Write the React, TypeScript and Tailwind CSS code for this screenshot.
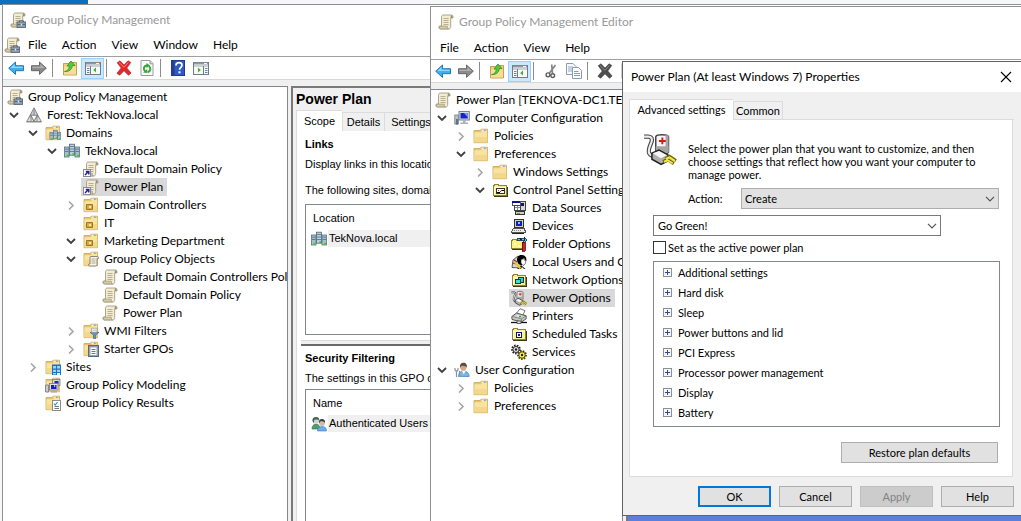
import { useState } from "react";
import type { ReactNode } from "react";

/* ---------- icon drawing helpers ---------- */

function Svg({ children, size = 16, box = 16, crisp = false }: { children: ReactNode; size?: number; box?: number; crisp?: boolean }) {
  return (
    <svg
      width={size}
      height={size}
      viewBox={`0 0 ${box} ${box}`}
      fill="none"
      aria-hidden="true"
      className="block shrink-0"
      shapeRendering={crisp ? "crispEdges" : "auto"}
    >
      {children}
    </svg>
  );
}

const ScrollShape = () => (
  <>
    <path d="M5.500 1h8c1.300 0 1.800 1.400 1.400 3h-2.200v8.600c0 1.500-.7 2.400-2 2.400H2.400c-1.600 0-1.900-2-.9-3H3.500V3.200C3.500 1.800 4.200 1 5.500 1z" fill="#f4ecd0" stroke="#a39c85" strokeWidth=".9" />
    <path d="M12.700 4V2.500c0-.8.4-1.300 1-1.300s1.200.9 1 2.800z" fill="#9a9070" />
    <path d="M1.600 12.200h7.800c-.3 1 .1 2.300 1 2.700H2.300c-1.200-.3-1.400-1.800-.7-2.700z" fill="#d8cba0" stroke="#8f8870" strokeWidth=".6" />
    <path d="M5.500 4.500h5M5.500 6.500h5M5.500 8.500h5M5.500 10.500h5" stroke="#b0a88a" strokeWidth=".9" />
  </>
);
const Scroll = () => <Svg><ScrollShape /></Svg>;
const ScrollTools = () => (
  <Svg>
    <ScrollShape />
    <path d="M9.500 10V8.800h4V10" stroke="#566371" strokeWidth="1" />
    <rect x="7" y="9.900" width="8.600" height="5.500" fill="#8b9db0" stroke="#52606e" strokeWidth=".8" />
    <path d="M7.400 12.500h7.800" stroke="#4b5967" strokeWidth=".8" />
    <rect x="10.700" y="11.600" width="1.500" height="2" fill="#dfe6ec" />
  </Svg>
);
const ScrollLink = () => (
  <Svg>
    <ScrollShape />
    <rect x=".5" y="8.500" width="7" height="7" fill="#fff" stroke="#8b8b95" />
    <path d="M2 14l3-3M2.800 10.500h3v3" stroke="#23238c" strokeWidth="1.500" />
  </Svg>
);

const FolderShape = () => (
  <>
    <path d="M1 2.500h6l1-1.300h6.500V14.700H1z" fill="#e9c66a" stroke="#c9a558" strokeWidth=".8" />
    <path d="M1.400 4.300H8l1-1.200h5.200v11.200H1.400z" fill="#f9e3a0" />
    <path d="M1.400 9h12.800v5.300H1.400z" fill="#f3d88c" />
    <path d="M8.500 2.200h5" stroke="#fff" />
    <path d="M10.800 2.200h2" stroke="#4c8fd0" />
  </>
);
const Folder = () => <Svg><FolderShape /></Svg>;
const FolderOU = () => (
  <Svg>
    <FolderShape />
    <path d="M3.500 7.500h6v5h-6z" fill="#d3aa48" stroke="#9a7826" />
    <rect x="6" y="9" width="2" height="2" fill="#fbe7a8" />
  </Svg>
);
const FolderScroll = () => (
  <Svg>
    <FolderShape />
    <path d="M8 5.500h6.500c1 0 1.200 1 1 1.800H14v6c0 1-.5 1.700-1.400 1.700H6.300c-.9 0-1-1.400-.4-2H7V6.500c0-.6.4-1 1-1z" fill="#f7f3e6" stroke="#7f7a6a" strokeWidth=".9" />
    <path d="M8.500 8h4M8.500 10h4M8.500 12h4" stroke="#9b957f" strokeWidth=".8" />
  </Svg>
);
const FolderFilter = () => (
  <Svg>
    <FolderShape />
    <path d="M7 9.300h9L12.700 12v3.500h-2.200V12z" fill="#6d93b5" stroke="#46647f" strokeWidth=".7" />
    <path d="M8.500 7.500V5.200h5.500v4.100H8.500z" fill="#f1f3f5" stroke="#9098a0" strokeWidth=".7" />
    <path d="M9.500 7.200h3.500" stroke="#a9b1b9" strokeWidth=".8" />
  </Svg>
);
const FolderStarter = () => (
  <Svg>
    <FolderShape />
    <rect x="5.500" y="4.500" width="10" height="11" fill="#8ea3b8" stroke="#596a7b" />
    <path d="M5 4.500h11" stroke="#a0533c" strokeWidth="1.200" />
    <rect x="7.500" y="6.500" width="6" height="7.500" fill="#fff" />
    <path d="M8.500 8.500h4M8.500 10.500h4M8.500 12.500h4" stroke="#4c82c4" />
  </Svg>
);
const FolderSites = () => (
  <Svg>
    <FolderShape />
    <rect x="7" y="5.500" width="9" height="10.500" fill="#1f6fc2" />
    <path d="M8 7h3v2.500H8zM12 7h3v2.500h-3zM8 10.700h3V13H8zM12 10.700h3V13h-3zM8 14h3v1.500H8z" fill="#9bd4f7" />
    <path d="M12 14h3v2h-3z" fill="#eaf6ff" />
  </Svg>
);
const FolderResults = () => (
  <Svg>
    <FolderShape />
    <rect x="7.500" y="5.500" width="8" height="10" fill="#fff" stroke="#8d8d8d" />
    <path d="M9 8.500l1.200 1.500L12.500 7" stroke="#2d8fd0" strokeWidth="1.200" />
    <path d="M9.500 11.500h4.500M9.500 13.500h4.500" stroke="#777" />
  </Svg>
);
const ServerShapes = () => (
  <>
    <rect x=".5" y="4" width="4.500" height="10" fill="#a9bfce" stroke="#587083" strokeWidth=".8" />
    <rect x="11" y="4" width="4.500" height="10" fill="#a9bfce" stroke="#587083" strokeWidth=".8" />
    <rect x="5.500" y="1.200" width="5" height="11" fill="#bdd0dc" stroke="#4a6478" strokeWidth=".8" />
    <path d="M1 6.200h3.500M1 8.500h3.500M6 3.500h4M6 6h4M6 8.500h4M11.500 6.200h3.500M11.500 8.500h3.500" stroke="#4f6e84" strokeWidth=".8" />
    <path d="M2.500 12.700h2M8.500 11h1.500M13 12.700h2" stroke="#37d51c" strokeWidth="1.800" />
  </>
);
const Servers = () => <Svg><ServerShapes /></Svg>;
const Domains = () => (
  <Svg>
    <FolderShape />
    <g transform="translate(4.500 4.300) scale(.74)"><ServerShapes /></g>
  </Svg>
);
const Forest = () => (
  <Svg>
    <path d="M8 .8L15.500 15H.5z" fill="#9b9b9b" stroke="#777" strokeWidth=".8" />
    <path d="M8 1.500L11 8H5z" fill="#cfcfcf" />
    <path d="M5 8.500L7.500 14H1.500zM11 8.500L14.500 14H8.500z" fill="#e2e2e2" />
    <path d="M8 1.500V8M5 8.500V14M11 8.500V14M4.500 8.200h7L8 14.500z" stroke="#737373" strokeWidth=".8" />
    <path d="M5.700 8.700h4.600L8 13z" fill="#fff" />
  </Svg>
);
const Modeling = () => (
  <Svg>
    <FolderShape />
    <rect x="7.500" y="2.500" width="7.500" height="6" fill="#d9d9d9" stroke="#777" strokeWidth=".8" />
    <rect x="9.500" y="4" width="4" height="3.200" fill="#2525c8" />
    <path d="M.5 8h3v7h-3z" fill="#c9ccd0" stroke="#777" strokeWidth=".8" />
    <rect x="4.500" y="6.500" width="8.500" height="6.500" fill="#e3e3e3" stroke="#777" strokeWidth=".8" />
    <rect x="6" y="8" width="5.500" height="4" fill="#1a1ad0" />
    <path d="M9 8h1.200v2H9z" fill="#9fb3ff" />
    <path d="M6 14.800h6" stroke="#aaa" strokeWidth="1.500" />
  </Svg>
);
const Users = () => (
  <Svg>
    <path d="M1 13c0-3 1.500-5 4-5s4 2 4 5z" fill="#4f9b70" stroke="#3a6d51" strokeWidth=".6" />
    <circle cx="5" cy="4.500" r="3.200" fill="#cfd5d2" />
    <path d="M1.500 5C1 2.300 2.700.9 5 .9s3.800 1.500 3.200 3.500C6.800 3 5 4 3.500 3.500 3 5 3 7 2.500 7z" fill="#466357" />
    <path d="M6.500 15c0-3 1.500-4.500 4.500-4.500s4.500 1.500 4.500 4.500z" fill="#69aee8" stroke="#3a7cba" strokeWidth=".6" />
    <circle cx="11" cy="7" r="2.900" fill="#ccbda8" />
    <path d="M8 7c-.3-2.400 1-4 3-4s3.400 1.500 3 4c-1-2-2.500-1.500-4-2-.8.600-1 1.500-2 2z" fill="#343c46" />
  </Svg>
);
const Computer = () => (
  <Svg>
    <rect x=".8" y="5" width="3.500" height="9" fill="#b7c6d0" stroke="#6c7b86" strokeWidth=".8" />
    <rect x="5" y="1.500" width="10.300" height="8.500" fill="#d8dde2" stroke="#78828b" />
    <rect x="6.500" y="3" width="7.300" height="5.500" fill="#1226c8" />
    <path d="M10 3h3.800v4.500z" fill="#7d93f2" />
    <path d="M9 10h2.500v2.500H14v1.500H6.500v-1.500H9z" fill="#aab1b8" />
    <path d="M3 9v5.500" stroke="#3f5a70" strokeWidth="1.500" />
  </Svg>
);
const UserConfig = () => (
  <Svg>
    <path d="M4.500 14.500c0-3.500 2-5.500 5-5.500s5.700 2 5.700 5.500z" fill="#79b4e6" stroke="#4680b5" strokeWidth=".7" />
    <path d="M8 9l1.800 3.500L11.500 9z" fill="#fff" />
    <circle cx="9.300" cy="5.500" r="3.100" fill="#d8a582" />
    <path d="M6 5.500C5.500 2.500 7 .8 9.500 .8s4 2 3.200 5C11.500 3.300 9.500 4.700 7.700 3.800z" fill="#5c4a3c" />
    <path d="M1 6v2L2.500 9.500v5.500M4 6v2L2.500 9.500M5.500 9v6" stroke="#8794a0" strokeWidth="1.200" />
  </Svg>
);

/* classic control panel icons */
const ClassicFolder = () => (
  <>
    <path d="M1.500 13.500v-10h1v-1h4v1h8v10z" fill="#f6f0a0" stroke="#8b8430" />
    <path d="M3 5.500h11M2.500 5v8" stroke="#fffce0" />
    <path d="M2 14.500h13.500V5" stroke="#3c3a18" />
  </>
);
const ControlPanel = () => (
  <Svg crisp>
    <ClassicFolder />
    <rect x="4.500" y="6.500" width="8" height="5" fill="#fff" stroke="#333" />
    <path d="M5 10.500h3M10 8.500h2" stroke="#000" />
    <path d="M8 10l2-2M6 8.500h1" stroke="#e01010" strokeWidth="1.200" />
  </Svg>
);
const DataSources = () => (
  <Svg crisp>
    <rect x="8.500" y="1.500" width="6" height="9" fill="#d8d8d8" stroke="#444" />
    <rect x="10" y="3" width="3" height="3" fill="#10128c" />
    <rect x="1.500" y="1.500" width="8" height="4" fill="#fff" stroke="#555" />
    <path d="M1 2h8" stroke="#10128c" strokeWidth="2" />
    <path d="M3.500 5.500h6v5h-6z" fill="#fff" stroke="#444" />
    <path d="M4 7.500h5M6.500 6v4" stroke="#888" />
    <path d="M4.500 11.500h9v3h-9z" fill="#cfcfcf" stroke="#333" />
    <path d="M6 13h3" stroke="#1ec81e" strokeWidth="1" />
  </Svg>
);
const Devices = () => (
  <Svg crisp>
    <rect x="3.500" y="1.500" width="9" height="8" fill="#d0d0d0" stroke="#333" />
    <rect x="5" y="3" width="6" height="5" fill="#1919c8" />
    <path d="M7 4h2v2H7z" fill="#7bd7ff" />
    <path d="M2.500 10.500h10l2 3v1h-14v-1z" fill="#ececec" stroke="#555" />
    <path d="M3 12.500h8" stroke="#888" strokeDasharray="1 1" />
    <path d="M12 9l3 4-2 2" stroke="#555" />
    <path d="M1 15.500h12" stroke="#222" />
  </Svg>
);
const FolderOptions = () => (
  <Svg crisp>
    <path d="M.5 4.500h1v-1h4v1h7v8H.5z" fill="#fbf37e" stroke="#8b8430" />
    <path d="M1 13.500h11" stroke="#3c3a18" />
    <path d="M3 7h2v2H3zM7 9h2v2H7z" fill="#fffbd0" />
    <path d="M6 2h8l2 2-2 2h-2V4H6z" fill="#55cbe8" stroke="#103c5c" strokeWidth=".8" />
    <path d="M8 2l3 2M13 1v4" stroke="#222" />
    <path d="M11 6h3v9h-3z" fill="#d8201c" stroke="#5d0606" strokeWidth=".8" />
  </Svg>
);
const LocalUsers = () => (
  <Svg>
    <path d="M1 13.500L2 6l5-4 3 4v8z" fill="#d5d5d5" stroke="#333" strokeWidth=".8" />
    <path d="M3 6l3 2M2 9l3 1" stroke="#a71919" strokeWidth="1.200" />
    <path d="M6.500 8C5 3.500 7.300.8 11 1c3.500.2 5 3 4.300 6-1.600-.3-1.600-2-2.300-3-1 1.500-2.700 1-3 3-.1 2 1.500 3 1 4-2 .4-4-1-4.500-3z" fill="#000" />
    <path d="M10 6.500c.6-1.600 2-1.200 3-2 .3 1.500 1 2.400 1.800 2.700 0 2-1 4-2.800 4.200L10 9z" fill="#fff" stroke="#222" strokeWidth=".6" />
    <path d="M6 15l4.500-3.500 4 3.500z" fill="#111" />
    <path d="M3.500 8l6 6.500" stroke="#e6c722" strokeWidth="2" />
    <path d="M10 15l1-2 2 2z" fill="#fff" />
  </Svg>
);
const NetworkOptions = () => (
  <Svg crisp>
    <ClassicFolder />
    <rect x="7.500" y="5.500" width="5" height="5" fill="#21d4d4" stroke="#1c3c3c" />
    <rect x="4.500" y="7.500" width="5" height="4" fill="#35e3dd" stroke="#1c3c3c" />
  </Svg>
);
const PowerShapes = () => (
  <>
    <path d="M.5 2.200h2c1.500 0 2 1 1.500 2.500S2 8.700 3 10.200 6 12 8 12.500" stroke="#444" strokeWidth="2" />
    <path d="M.5 2.200h2c1.500 0 2 1 1.500 2.500S2 8.700 3 10.200 6 12 8 12.500" stroke="#ececec" strokeWidth="1" />
    <path d="M6 2.200C6.500 1 11.500 1 12 2.200v7.300c-.6 1.200-5.400 1.200-6 0z" fill="#f6f6f6" stroke="#444" strokeWidth=".7" />
    <path d="M10.600 1.500H12v8l-1.400.6z" fill="#a8a8a8" />
    <path d="M7.500 4.200h3.200M9.100 2.600v3.200" stroke="#e21414" strokeWidth=".9" />
    <path d="M6 6.700h6v2.800c-.6 1.200-5.400 1.200-6 0z" fill="#a5a5a5" />
    <path d="M4.200 10l3.300-1.500 4.300 2.300v2.700l-3.300 1.800-4.300-2.500z" fill="#b0b0b0" stroke="#222" strokeWidth=".7" />
    <path d="M4.600 10l3-1.100 3.600 2-2.800 1.400z" fill="#f5f5f5" />
    <path d="M10.500 12.700l2-1.200 3 2M9.500 14l2-1.100 3 2" stroke="#6e6408" strokeWidth="1.500" />
    <path d="M10.700 12.700l1.800-.8 2.500 1.700M9.900 14l1.700-.7 2.400 1.400" stroke="#f6e74b" strokeWidth=".9" />
  </>
);
const PowerOptions = () => <Svg><PowerShapes /></Svg>;
const Printers = () => (
  <Svg>
    <path d="M5 6l4-5.300 5 2L11.500 8z" fill="#fff" stroke="#555" strokeWidth=".8" />
    <path d="M.8 8.500L5.500 5l9.700 2.800v3L10.500 14 1 11.500z" fill="#c7c7c7" stroke="#333" strokeWidth=".8" />
    <path d="M1.500 8.500l9 2.400 4.300-2.900M10.500 11v3" stroke="#6b6b6b" strokeWidth=".7" />
    <path d="M5.500 7.600l5 1.300" stroke="#eee" strokeWidth="1.300" />
    <path d="M8 8.700h2" stroke="#19b519" strokeWidth="1.300" />
    <path d="M0 14.500h16" stroke="#111" strokeWidth="1.300" />
    <path d="M6 13h4v2.500H6z" fill="#ddd" stroke="#444" strokeWidth=".8" />
  </Svg>
);
const ScheduledTasks = () => (
  <Svg crisp>
    <ClassicFolder />
    <rect x="5.500" y="6.500" width="5" height="5" fill="#fff" stroke="#10107c" />
    <rect x="7" y="8" width="2" height="2" fill="#1a1a8c" />
  </Svg>
);
const Services = () => (
  <Svg>
    <circle cx="5" cy="5.500" r="3.800" fill="#fff" stroke="#222" strokeWidth="2.200" strokeDasharray="1.500 1.100" />
    <circle cx="5" cy="5.500" r="3" fill="#e8e8e8" stroke="#222" strokeWidth=".9" />
    <circle cx="5" cy="5.500" r="1.200" fill="#222" />
    <circle cx="11" cy="11" r="3.800" fill="#f6e64b" stroke="#4a4205" strokeWidth="2.200" strokeDasharray="1.500 1.100" />
    <circle cx="11" cy="11" r="3.200" fill="#fbee67" stroke="#4a4205" strokeWidth=".9" />
    <circle cx="11" cy="11" r="1.200" fill="#222" />
  </Svg>
);

/* toolbar icons */
const Back = () => (
  <Svg>
    <path d="M.7 8.200L7.500 2v3.700h8v5h-8v3.700z" fill="#3fb0ee" stroke="#1b6cab" strokeWidth=".9" />
    <path d="M2.300 8L6.600 4v2.700h8V8z" fill="#8fd9fb" />
  </Svg>
);
const Forward = () => (
  <Svg>
    <path d="M15.300 8.200L8.500 2v3.700h-8v5h8v3.700z" fill="#8c8c8c" stroke="#5d5d5d" strokeWidth=".9" />
    <path d="M13.700 8L9.400 4v2.700h-8V8z" fill="#b0b0b0" />
  </Svg>
);
const UpFolder = () => (
  <Svg>
    <path d="M1.500 3.500h5l1-1h7v12.500h-13z" fill="#efcf7b" stroke="#b98f36" strokeWidth=".8" />
    <path d="M2 6.500h12v8H2z" fill="#f7dd96" />
    <path d="M2.500 11.500C5.500 11 7 9.500 7.300 6H5l4-5 4 4.500H10.400C10 9.500 7 12 2.500 11.500z" fill="#4fcb3d" stroke="#2a8a23" strokeWidth=".7" />
  </Svg>
);
const Pane = ({ flip = false }: { flip?: boolean }) => (
  <Svg>
    <rect x=".5" y="2.500" width="15" height="12" fill="#f8f9fa" stroke="#737b84" />
    <path d="M1 3.500h14" stroke="#8f98a3" strokeWidth="2" />
    <path d="M11 3.500h3" stroke="#fff" strokeWidth=".9" />
    <path d="M1 6h14" stroke="#a0a7af" />
    <path d={flip ? "M10.500 6v8.500" : "M5.500 6v8.500"} stroke="#737b84" />
    <path d={flip ? "M12 8.500h2.500M12 10.500h2.500M12 12.500h2.500" : "M2 8.500h2.500M2 10.500h2.500M2 12.500h2.500"} stroke="#5f86b8" />
    <path d={flip ? "M5 7.500v5L7.800 10z" : "M11 7.500v5L8.200 10z"} fill="#3bb52c" />
  </Svg>
);
const Cross = ({ gray = false }: { gray?: boolean }) => (
  <Svg>
    <path
      d="M1.200 2.800L4 .8 8 5l4-4.200 2.800 1.600L10.800 8l4.300 5-2.600 2.300L8 10.800l-4.300 4.400L.9 13.300 5.200 8z"
      fill={gray ? "#4e4e4e" : "#e3282b"}
      stroke={gray ? "#3c3c3c" : "#b51518"}
      strokeWidth=".6"
    />
    <path d="M3 2.500L8 7.300l4.300-4.800" stroke={gray ? "#858585" : "#f58081"} strokeWidth="1" />
  </Svg>
);
const Refresh = () => (
  <Svg>
    <path d="M2 .5h9l3 3v12H2z" fill="#fbfbfb" stroke="#9a9a9a" />
    <path d="M11 .8v3h3" fill="#ddd" stroke="#9a9a9a" />
    <path d="M6.200 11.300C3.800 9.500 4.700 5.700 8 5.500M9.800 6.200c2.500 1.500 2 5.300-1.300 6" stroke="#35a637" strokeWidth="1.900" />
    <path d="M7.500 3l3.600 2.500L7.500 8zM4 12.500l4.200.5V9z" fill="#35a637" />
  </Svg>
);
const HelpIcon = () => (
  <Svg>
    <rect x="1.500" y=".5" width="13" height="15" fill="#3059c4" stroke="#1c3c91" />
    <path d="M1.500.5h3v15h-3z" fill="#233f94" />
    <path d="M6 5.500C6 3.500 7.200 2.700 9 2.700s3 1 3 2.500c0 2-2.500 2.200-2.500 4.600" stroke="#fff" strokeWidth="1.700" />
    <rect x="8.500" y="11.300" width="2" height="2" fill="#fff" />
  </Svg>
);
const Cut = () => (
  <Svg>
    <path d="M12.500 2L6.500 10M8.700 1.500l.8 8.500" stroke="#858585" strokeWidth="1.700" />
    <circle cx="5" cy="11.800" r="1.900" stroke="#5c5c5c" strokeWidth="1.400" />
    <circle cx="9.700" cy="12.600" r="1.900" stroke="#5c5c5c" strokeWidth="1.400" />
  </Svg>
);
const Copy = () => (
  <Svg>
    <path d="M.5.5h6.500l3 3v8H.5z" fill="#f6f9fc" stroke="#8d9bab" />
    <path d="M2 4h5M2 6h5M2 8h4" stroke="#8aaed0" />
    <path d="M6.500 4.500h6l3 3v8h-9z" fill="#fff" stroke="#8d9bab" />
    <path d="M8 8.500h4.500M8 10.500h6M8 12.500h6" stroke="#7c9fc4" />
  </Svg>
);

const ChevronOpen = () => (
  <svg width="10" height="10" viewBox="0 0 10 10" fill="none" aria-hidden="true">
    <path d="M1 3l4 4 4-4" stroke="#404040" strokeWidth="1.800" />
  </svg>
);
const ChevronShut = () => (
  <svg width="10" height="10" viewBox="0 0 10 10" fill="none" aria-hidden="true">
    <path d="M3 1.500l4 4-4 4" stroke="#a6a6a6" strokeWidth="1.600" />
  </svg>
);
const ChevronThin = () => (
  <svg width="10" height="6" viewBox="0 0 10 6" fill="none" aria-hidden="true">
    <path d="M1 .8l4 4 4-4" stroke="#555" strokeWidth="1.200" />
  </svg>
);

/* ---------- tree ---------- */

type Node = { level: number; label: string; icon: ReactNode; state?: "open" | "shut"; selected?: boolean };

const indents = ["pl-[4px]", "pl-[5px]", "pl-[24px]", "pl-[43px]", "pl-[62px]", "pl-[81px]"];

function Tree({ label, nodes }: { label: string; nodes: Node[] }) {
  return (
    <ul role="tree" aria-label={label} className="pt-px">
      {nodes.map((n, i) => (
        <li
          key={i}
          role="treeitem"
          aria-level={n.level + 1}
          aria-selected={!!n.selected}
          className={`flex h-[18px] items-center whitespace-nowrap ${indents[n.level]}`}
        >
          {n.level > 0 && (
            <span className="flex w-4 shrink-0 items-center pl-px">
              {n.state && (
                <button type="button" aria-label={`${n.state === "open" ? "Collapse" : "Expand"} ${n.label}`}>
                  {n.state === "open" ? <ChevronOpen /> : <ChevronShut />}
                </button>
              )}
            </span>
          )}
          <span className={`flex h-[18px] items-center gap-[5px] pr-1 ${n.level > 0 ? "pl-[2px]" : ""} ${n.selected ? "bg-[#d9d9d9]" : ""}`}>
            {n.icon}
            <span>{n.label}</span>
          </span>
        </li>
      ))}
    </ul>
  );
}

const managementNodes: Node[] = [
  { level: 0, label: "Group Policy Management", icon: <ScrollTools /> },
  { level: 1, label: "Forest: TekNova.local", icon: <Forest />, state: "open" },
  { level: 2, label: "Domains", icon: <Domains />, state: "open" },
  { level: 3, label: "TekNova.local", icon: <Servers />, state: "open" },
  { level: 4, label: "Default Domain Policy", icon: <ScrollLink /> },
  { level: 4, label: "Power Plan", icon: <ScrollLink />, selected: true },
  { level: 4, label: "Domain Controllers", icon: <FolderOU />, state: "shut" },
  { level: 4, label: "IT", icon: <FolderOU /> },
  { level: 4, label: "Marketing Department", icon: <FolderOU />, state: "open" },
  { level: 4, label: "Group Policy Objects", icon: <FolderScroll />, state: "open" },
  { level: 5, label: "Default Domain Controllers Policy", icon: <Scroll /> },
  { level: 5, label: "Default Domain Policy", icon: <Scroll /> },
  { level: 5, label: "Power Plan", icon: <Scroll /> },
  { level: 4, label: "WMI Filters", icon: <FolderFilter />, state: "shut" },
  { level: 4, label: "Starter GPOs", icon: <FolderStarter />, state: "shut" },
  { level: 2, label: "Sites", icon: <FolderSites />, state: "shut" },
  { level: 2, label: "Group Policy Modeling", icon: <Modeling /> },
  { level: 2, label: "Group Policy Results", icon: <FolderResults /> },
];

const editorNodes: Node[] = [
  { level: 0, label: "Power Plan [TEKNOVA-DC1.TEKNOVA.LOCAL] Policy", icon: <Scroll /> },
  { level: 1, label: "Computer Configuration", icon: <Computer />, state: "open" },
  { level: 2, label: "Policies", icon: <Folder />, state: "shut" },
  { level: 2, label: "Preferences", icon: <Folder />, state: "open" },
  { level: 3, label: "Windows Settings", icon: <Folder />, state: "shut" },
  { level: 3, label: "Control Panel Settings", icon: <ControlPanel />, state: "open" },
  { level: 4, label: "Data Sources", icon: <DataSources /> },
  { level: 4, label: "Devices", icon: <Devices /> },
  { level: 4, label: "Folder Options", icon: <FolderOptions /> },
  { level: 4, label: "Local Users and Groups", icon: <LocalUsers /> },
  { level: 4, label: "Network Options", icon: <NetworkOptions /> },
  { level: 4, label: "Power Options", icon: <PowerOptions />, selected: true },
  { level: 4, label: "Printers", icon: <Printers /> },
  { level: 4, label: "Scheduled Tasks", icon: <ScheduledTasks /> },
  { level: 4, label: "Services", icon: <Services /> },
  { level: 1, label: "User Configuration", icon: <UserConfig />, state: "open" },
  { level: 2, label: "Policies", icon: <Folder />, state: "shut" },
  { level: 2, label: "Preferences", icon: <Folder />, state: "shut" },
];

/* ---------- window chrome ---------- */

function MenuBar({ items }: { items: string[] }) {
  return (
    <nav aria-label="Menu" className="flex gap-[15px]">
      {items.map((item) => (
        <button key={item} type="button">{item}</button>
      ))}
    </nav>
  );
}

function Tool({ label, children, active = false }: { label: string; children: ReactNode; active?: boolean }) {
  return (
    <button
      type="button"
      aria-label={label}
      aria-pressed={active || undefined}
      className={`flex h-[21px] w-[23px] shrink-0 items-center justify-center ${active ? "border border-[#99d1ff] bg-[#cce8ff]" : ""}`}
    >
      {children}
    </button>
  );
}
const Separator = () => <span className="mr-[5px] ml-[2px] h-[18px] w-px shrink-0 bg-[#8c8c8c]" />;

const uiFont = "font-[family-name:Lato,sans-serif] text-[12px] leading-[18px]";
const formFont = "font-[family-name:Liberation_Sans,Arial,sans-serif] text-[11px] leading-[16px]";
const dialogFont = "font-[family-name:Lato,sans-serif] text-[11px] leading-[13px]";

function ListTable({ head, row, icon }: { head: string; row: string; icon: ReactNode }) {
  return (
    <table className="w-full border-collapse text-left">
      <thead>
        <tr>
          <th className="h-[25px] pt-px pl-[7px] font-normal">{head}</th>
        </tr>
      </thead>
      <tbody>
        <tr>
          <td className="p-0 pl-[5px]">
            <span className="flex items-center gap-px">
              {icon}
              <span className="h-[17px] flex-1 bg-[#f0f0f0] pl-px whitespace-nowrap">{row}</span>
            </span>
          </td>
        </tr>
      </tbody>
    </table>
  );
}

function ManagementWindow() {
  return (
    <section
      aria-label="Group Policy Management"
      className={`absolute top-1 right-0 bottom-0 left-[2px] flex flex-col border-t border-l border-[#8c8f94] bg-white text-black ${uiFont}`}
    >
      <header className="flex h-[29px] items-center gap-[5px] pl-[7px] text-[#999]">
        <ScrollTools />
        <h1>Group Policy Management</h1>
      </header>
      <div className="flex h-[23px] items-center gap-2 border-b border-[#a0a0a0] pl-px">
        <ScrollTools />
        <MenuBar items={["File", "Action", "View", "Window", "Help"]} />
      </div>
      <div role="toolbar" aria-label="Tools" className="flex h-[23px] items-center border-b border-[#d8d8d8] pl-px">
        <Tool label="Back"><Back /></Tool>
        <Tool label="Forward"><Forward /></Tool>
        <Separator />
        <Tool label="Up one level"><UpFolder /></Tool>
        <Tool label="Show console tree" active><Pane /></Tool>
        <Separator />
        <Tool label="Delete"><Cross /></Tool>
        <Tool label="Refresh"><Refresh /></Tool>
        <Separator />
        <Tool label="Help"><HelpIcon /></Tool>
        <Tool label="Show action pane"><Pane flip /></Tool>
      </div>
      <div className="flex min-h-0 flex-1 bg-[#f0f0f0] pt-[6px]">
        <div className="w-[285px] shrink-0 overflow-hidden border border-b-0 border-l-0 border-[#828790] bg-white">
          <Tree label="Console tree" nodes={managementNodes} />
        </div>
        <div className={`ml-[3px] min-w-0 flex-1 border-t-2 border-l-2 border-[#7a7a7a] pl-[3px] ${formFont}`}>
          <h2 className="h-[22px] pt-[3px] text-[14px] font-bold">Power Plan</h2>
          <div role="tablist" className="flex items-end">
            <button type="button" role="tab" aria-selected="true" className="h-[21px] w-[46px] border-t border-l border-[#dcdcdc] bg-white">Scope</button>
            <button type="button" role="tab" aria-selected="false" className="h-[19px] w-[42px] border-t border-l border-[#dcdcdc]">Details</button>
            <button type="button" role="tab" aria-selected="false" className="h-[19px] w-[54px] border-t border-x border-[#dcdcdc]">Settings</button>
          </div>
          <div role="tabpanel" className="flex h-full flex-col border-l border-[#dcdcdc] bg-white">
            <div className="px-2 pt-[5px] whitespace-nowrap">
              <h3 className="font-bold">Links</h3>
              <p className="mt-1">Display links in this location:</p>
              <p className="mt-[10px]">The following sites, domains, and OUs are linked to this GPO:</p>
              <div className="mt-[6px] h-[131px] border border-[#828790]">
                <ListTable head="Location" row="TekNova.local" icon={<Servers />} />
              </div>
            </div>
            <div className="mt-[5px] ml-1 h-[6px] border-t border-b-2 border-t-[#dcdcdc] border-b-[#696969] bg-[#f0f0f0]" />
            <div className="flex flex-1 flex-col px-2 pt-1 whitespace-nowrap">
              <h3 className="font-bold">Security Filtering</h3>
              <p className="mt-1">The settings in this GPO can only apply to the following:</p>
              <div className="mt-[3px] flex-1 border border-[#828790]">
                <ListTable head="Name" row="Authenticated Users" icon={<Users />} />
              </div>
            </div>
          </div>
        </div>
      </div>
    </section>
  );
}

function EditorWindow() {
  return (
    <section
      aria-label="Group Policy Management Editor"
      className={`absolute top-[6px] right-0 bottom-0 left-[430px] flex flex-col border-t border-l border-[#8c8f94] bg-white text-black ${uiFont}`}
    >
      <header className="flex h-[30px] items-center gap-[5px] pl-[7px] text-[#999]">
        <Scroll />
        <h1>Group Policy Management Editor</h1>
      </header>
      <div className="flex h-[23px] items-center border-b border-[#a0a0a0] pl-[9px]">
        <MenuBar items={["File", "Action", "View", "Help"]} />
      </div>
      <div role="toolbar" aria-label="Tools" className="flex h-[23px] items-center border-b border-[#d8d8d8]">
        <Tool label="Back"><Back /></Tool>
        <Tool label="Forward"><Forward /></Tool>
        <Separator />
        <Tool label="Up one level"><UpFolder /></Tool>
        <Tool label="Show console tree" active><Pane /></Tool>
        <Separator />
        <Tool label="Cut"><Cut /></Tool>
        <Tool label="Copy"><Copy /></Tool>
        <Separator />
        <Tool label="Delete"><Cross gray /></Tool>
        <Tool label="Properties"><Refresh /></Tool>
      </div>
      <div className="flex min-h-0 flex-1 bg-[#f0f0f0] pt-[6px]">
        <div className="w-[192px] shrink-0 overflow-hidden border border-b-0 border-l-0 border-[#828790] bg-white">
          <Tree label="Editor tree" nodes={editorNodes} />
        </div>
        <div className="ml-[3px] min-w-0 flex-1 border-t-2 border-l-2 border-[#7a7a7a] bg-[#5b7fdb]" />
      </div>
    </section>
  );
}

/* ---------- properties dialog ---------- */

const groups = ["Additional settings", "Hard disk", "Sleep", "Power buttons and lid", "PCI Express", "Processor power management", "Display", "Battery"];

function PropertiesDialog() {
  const [active, setActive] = useState(false);
  const [plan, setPlan] = useState("Go Green!");
  const [action, setAction] = useState("Create");
  const button = "h-[21px] w-[73px] border border-[#adadad] bg-[#e1e1e1]";
  return (
    <section
      role="dialog"
      aria-label="Power Plan (At least Windows 7) Properties"
      className={`absolute top-[61px] right-0 left-[622px] border border-r-0 border-[#646464] bg-[#f0f0f0] text-black ${dialogFont}`}
    >
      <header className={`flex h-[30px] items-center justify-between bg-white pr-[9px] pl-2 ${uiFont}`}>
        <h1>Power Plan (At least Windows 7) Properties</h1>
        <button type="button" aria-label="Close">
          <svg width="12" height="12" viewBox="0 0 12 12" fill="none" aria-hidden="true">
            <path d="M1 1l10 10M11 1L1 11" stroke="#000" strokeWidth="1.100" />
          </svg>
        </button>
      </header>
      <div className="pt-[7px] pr-[7px] pb-2 pl-[6px]">
        <div role="tablist" className="flex items-end">
          <button type="button" role="tab" aria-selected="true" className="h-[21px] w-[104px] border-t border-l border-[#dcdcdc] bg-white pb-[2px]">Advanced settings</button>
          <button type="button" role="tab" aria-selected="false" className="h-[19px] w-[50px] border border-[#dcdcdc]">Common</button>
          <span className="flex-1 border-b border-[#dcdcdc]" />
        </div>
        <div role="tabpanel" className="mr-px border border-t-0 border-[#dcdcdc] bg-white pr-3 pb-[13px] pl-[13px]">
          <div className="flex gap-[11px] pt-3">
            <Svg size={34} box={16}><PowerShapes /></Svg>
            <p className="max-w-[300px] pt-[10px]">Select the power plan that you want to customize, and then choose settings that reflect how you want your computer to manage power.</p>
          </div>
          <div className="mt-[7px] flex items-center pr-px pl-[45px]">
            <label htmlFor="action" className="w-[53px]">Action:</label>
            <span className="relative flex flex-1 items-center">
              <select
                id="action"
                value={action}
                onChange={(e) => setAction(e.target.value)}
                className="h-[21px] w-full appearance-none border border-[#adadad] bg-[#e1e1e1] pl-[3px]"
              >
                <option>Create</option>
                <option>Replace</option>
                <option>Update</option>
                <option>Delete</option>
              </select>
              <span className="pointer-events-none absolute right-1"><ChevronThin /></span>
            </span>
          </div>
          <div className="pl-[10px]">
            <div className="mt-[6px] mr-[59px] flex h-[21px] items-center border border-[#7a7a7a] pr-[3px] pl-1">
              <input aria-label="Power plan" value={plan} onChange={(e) => setPlan(e.target.value)} className="min-w-0 flex-1 outline-none" />
              <button type="button" aria-label="Choose a power plan"><ChevronThin /></button>
            </div>
            <div className="mt-[5px] flex items-center gap-[2px]">
              <input
                id="active"
                type="checkbox"
                checked={active}
                onChange={(e) => setActive(e.target.checked)}
                className="size-[13px] appearance-none border border-[#333] bg-white checked:bg-[#0078d7]"
              />
              <label htmlFor="active">Set as the active power plan</label>
            </div>
            <ul className="mt-[7px] h-[166px] border border-[#828790]">
              {groups.map((g) => (
                <li key={g} className="flex h-5 items-center gap-[6px] pl-[9px]">
                  <button type="button" aria-label={`Expand ${g}`}>
                    <svg width="9" height="9" viewBox="0 0 9 9" aria-hidden="true" shapeRendering="crispEdges">
                      <rect x=".5" y=".5" width="8" height="8" fill="#f6f6f6" stroke="#8e8f8f" />
                      <path d="M2 4h5v1H2zM4 2h1v5H4z" fill="#2a4a9a" />
                    </svg>
                  </button>
                  {g}
                </li>
              ))}
            </ul>
            <div className="mt-[15px] flex justify-end pr-[2px]">
              <button type="button" className="h-[21px] w-[157px] border border-[#adadad] bg-[#e1e1e1]">Restore plan defaults</button>
            </div>
          </div>
        </div>
        <div className="mt-[9px] flex justify-end gap-2">
          <button type="button" className="h-[21px] w-[73px] border-2 border-[#0078d7] bg-[#e1e1e1]">OK</button>
          <button type="button" className={button}>Cancel</button>
          <button type="button" disabled className="h-[21px] w-[73px] border border-[#bfbfbf] bg-[#cccccc] text-[#838383]">Apply</button>
          <button type="button" className={button}>Help</button>
        </div>
      </div>
    </section>
  );
}

export default function App() {
  return (
    <main className="relative h-screen w-full overflow-hidden bg-[#f7f7f7]">
      <div className="h-[5px] w-[88px] bg-[#0b6fc0]" />
      <ManagementWindow />
      <EditorWindow />
      <PropertiesDialog />
    </main>
  );
}
